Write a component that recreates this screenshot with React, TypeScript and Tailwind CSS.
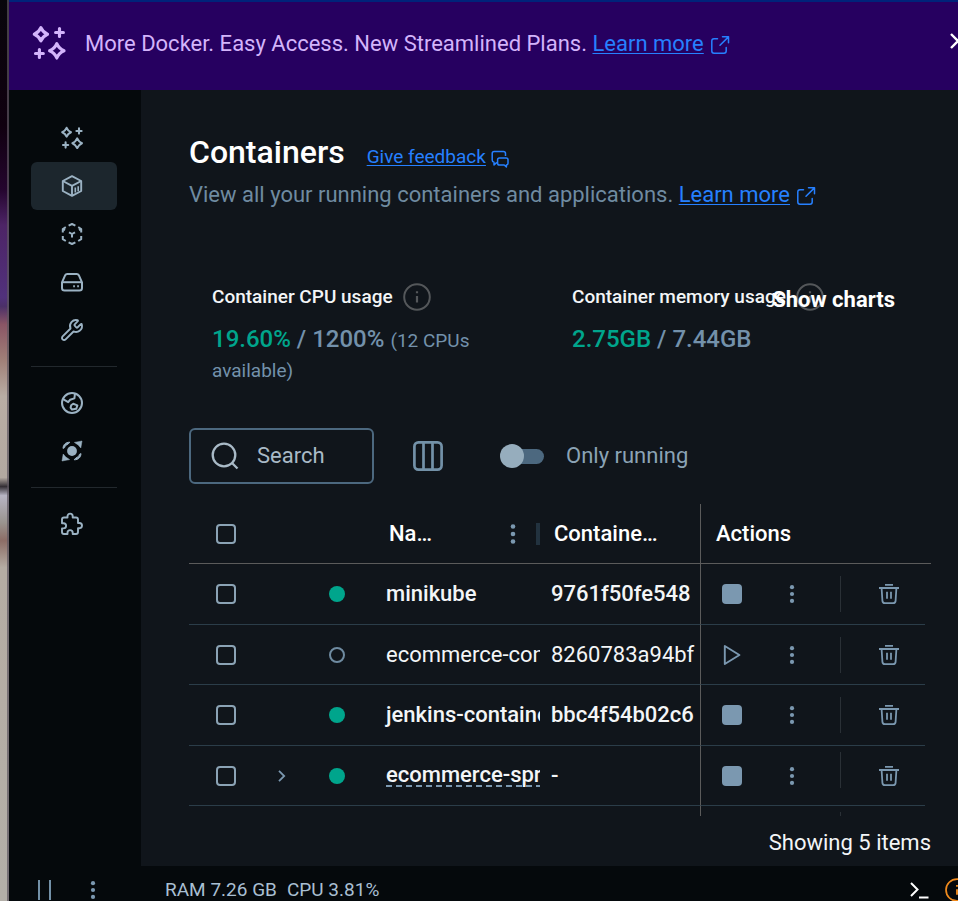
import type { ReactNode } from "react";
import { Wrench } from "lucide-react";

const sparkle = (cx: number, cy: number, r: number) =>
  `M${cx} ${cy - r}Q${cx + r * 0.3} ${cy - r * 0.3} ${cx + r} ${cy}Q${cx + r * 0.3} ${cy + r * 0.3} ${cx} ${cy + r}Q${cx - r * 0.3} ${cy + r * 0.3} ${cx - r} ${cy}Q${cx - r * 0.3} ${cy - r * 0.3} ${cx} ${cy - r}Z`;

function Sparkles({ className }: { className: string }) {
  return (
    <svg viewBox="0 0 24 24" className={className} fill="none" stroke="currentColor" strokeWidth="2.1" strokeLinejoin="round" strokeLinecap="round" aria-hidden="true">
      <path d={sparkle(6.6, 6.2, 4.4)} />
      <path d={sparkle(17.2, 17.2, 4.8)} />
      <path d="M19 2.400v5.200M16.400 5h5.200M5.600 16.400v5.200M3 19h5.200" />
    </svg>
  );
}

function ContainerIcon() {
  return (
    <svg viewBox="0 0 24 24" className="size-6" fill="none" stroke="currentColor" strokeWidth="1.9" strokeLinejoin="round" aria-hidden="true">
      <path d="M12 2.2 21.2 7v10L12 21.8 2.8 17V7Z" />
      <path d="M2.8 7 12 11.8 21.2 7M12 11.8v10" />
      <path d="M15.3 13.6v5M18.2 12.2v5" strokeWidth="1.6" />
    </svg>
  );
}

function ImageIcon() {
  return (
    <svg viewBox="0 0 24 24" className="size-6" fill="none" stroke="currentColor" strokeWidth="2" strokeLinejoin="round" aria-hidden="true">
      <path d="M8.6 3.6 12 2l3.4 1.6M18.2 5.2 21.2 7v3.4M21.2 14v3.2l-3 1.8M15.4 20.4 12 22l-3.4-1.6M5.8 19l-3-1.8V14M2.8 10.4V7l3-1.8" />
      <path d="M9 10.3 12 12l3-1.7M12 12v3.6" />
      <path d="M2.8 7 5 8.2M21.2 7 19 8.2" />
    </svg>
  );
}

function VolumeIcon() {
  return (
    <svg viewBox="0 0 24 24" className="size-6" fill="none" stroke="currentColor" strokeWidth="2" strokeLinejoin="round" aria-hidden="true">
      <path d="M2 12.4 5.2 5.2Q5.8 4 7.2 4h9.6q1.4 0 2 1.2L22 12.4V18q0 2.6-2.6 2.6H4.600Q2 20.600 2 18Z" />
      <path d="M2 12.200h20" />
      <path d="M13.200 16.200h1.700M17.200 16.200h1.700" />
    </svg>
  );
}

function EarthIcon() {
  return (
    <svg viewBox="0 0 24 24" className="size-6" fill="none" stroke="currentColor" strokeWidth="2" strokeLinejoin="round" aria-hidden="true">
      <circle cx="12" cy="12" r="10" />
      <path d="M3 8.200 8.200 11.200 10 8.800 14.400 7.400 15 2.600" />
      <path d="M11.200 14.200 13.200 12.800 17.400 14.400 16.200 17.800 12 18.600 10.600 16.600Z" />
    </svg>
  );
}

function ScoutIcon() {
  return (
    <svg viewBox="0 0 24 24" className="size-6" fill="currentColor" aria-hidden="true">
      <circle cx="12" cy="12" r="4.900" />
      <path d="M22 2 20.800 9Q18.400 5.400 14.400 3.400ZM2 22 3.200 15Q5.600 18.600 9.600 20.600Z" stroke="currentColor" strokeWidth=".5" strokeLinejoin="round" />
      <path d="M3 9.400C3.200 5.600 5.600 3.200 9.800 3.200L8.200 5C6.200 5.800 5.200 6.800 4.600 8.600ZM21 14.600C20.800 18.400 18.400 20.800 14.200 20.800L15.800 19C17.800 18.200 18.800 17.200 19.400 15.400Z" stroke="currentColor" strokeLinejoin="round" />
    </svg>
  );
}

function PuzzleIcon() {
  return (
    <svg viewBox="0 0 24 24" className="size-6" fill="none" stroke="currentColor" strokeWidth="1.9" strokeLinejoin="round" aria-hidden="true">
      <path d="M7.500 5.500V4.200a2.600 2.600 0 0 1 5.200 0v1.300H16q2 0 2 2V11h1.400a2.600 2.600 0 0 1 0 5.200H18V20q0 2-2 2h-3.300v-1.300a2.600 2.600 0 0 0-5.200 0V22H4q-2 0-2-2v-3.600h1.500a2.600 2.600 0 0 0 0-5.200H2V7.500q0-2 2-2Z" />
    </svg>
  );
}

function ExternalIcon() {
  return (
    <svg viewBox="0 0 20 20" className="mt-0.5 size-5 shrink-0" fill="none" stroke="currentColor" strokeWidth="1.500" strokeLinecap="round" strokeLinejoin="round" aria-hidden="true">
      <path d="M7.500 3.800H4Q1.800 3.800 1.800 6v10q0 2.200 2.200 2.200h10q2.200 0 2.200-2.200v-3.500" />
      <path d="M12.500 1.800h6v6M18.200 2.100 10 10.300" />
    </svg>
  );
}

function FeedbackIcon() {
  return (
    <svg viewBox="0 0 20 20" className="mt-1 size-5 shrink-0" fill="none" stroke="currentColor" strokeWidth="1.500" strokeLinejoin="round" aria-hidden="true">
      <path d="M15.500 7V4.600Q15.500 2.500 13.400 2.500H4.200Q2.200 2.500 2.200 4.600V11q0 2 1.800 2.200v2.700L7 13.400" />
      <path d="M9.400 9h6.800q1.800 0 1.800 1.800v3.400q0 1.600-1.600 1.700v2L14.200 16H9.400q-1.800 0-1.800-1.800v-3.400Q7.600 9 9.400 9Z" />
    </svg>
  );
}

function InfoIcon({ className }: { className: string }) {
  return (
    <svg viewBox="0 0 28 28" className={className} fill="none" stroke="currentColor" strokeWidth="2" aria-hidden="true">
      <circle cx="14" cy="14" r="12.800" />
      <path d="M14 13v6.500M14 8.200v2" strokeWidth="2.200" />
    </svg>
  );
}

function Dots({ className }: { className: string }) {
  return (
    <svg viewBox="0 0 8 24" className={className} fill="currentColor" aria-hidden="true">
      <circle cx="4" cy="4.500" r="2.300" />
      <circle cx="4" cy="12" r="2.300" />
      <circle cx="4" cy="19.500" r="2.300" />
    </svg>
  );
}

function TrashIcon() {
  return (
    <svg viewBox="0 0 20 20" className="size-5" fill="none" stroke="currentColor" strokeWidth="1.800" aria-hidden="true">
      <path d="M6 .9h8M0 4h20M2.600 4 3.400 16.800Q3.600 19.100 5.800 19.100h8.400q2.200 0 2.400-2.300L17.400 4M8 7.800v7M12 7.800v7" />
    </svg>
  );
}

function NavItem({ label, active, children }: { label: string; active?: boolean; children: ReactNode }) {
  return (
    <li>
      <a
        href="#"
        aria-label={label}
        className={`flex h-12 items-center rounded-md pl-[29px] text-[#9bb2c3] ${active ? "bg-[#1c262d]" : ""}`}
      >
        {children}
      </a>
    </li>
  );
}

function Sidebar() {
  return (
    <nav className="w-[132px] shrink-0 pt-6 pr-6 pl-[22px]">
      <ul>
        <NavItem label="Ask Gordon"><Sparkles className="size-6" /></NavItem>
        <NavItem label="Containers" active><ContainerIcon /></NavItem>
        <NavItem label="Images"><ImageIcon /></NavItem>
        <NavItem label="Volumes"><VolumeIcon /></NavItem>
        <NavItem label="Builds"><Wrench className="size-6" strokeWidth={1.9} /></NavItem>
      </ul>
      <hr className="my-3 border-[#22282d]" />
      <ul>
        <NavItem label="Docker Hub"><EarthIcon /></NavItem>
        <NavItem label="Docker Scout"><ScoutIcon /></NavItem>
      </ul>
      <hr className="my-3 border-[#22282d]" />
      <ul>
        <NavItem label="Extensions"><PuzzleIcon /></NavItem>
      </ul>
    </nav>
  );
}

type Row = { name: string; id: string; running: boolean; group?: boolean };

const rows: Row[] = [
  { name: "minikube", id: "9761f50fe548", running: true },
  { name: "ecommerce-container", id: "8260783a94bf", running: false },
  { name: "jenkins-container", id: "bbc4f54b02c6", running: true },
  { name: "ecommerce-spring", id: "-", running: true, group: true },
];

function Check({ label }: { label: string }) {
  return (
    <input
      type="checkbox"
      aria-label={label}
      className="mx-auto block size-5 appearance-none rounded-[4px] border-2 border-[#8ba3b5]"
    />
  );
}

function ContainerRow({ row }: { row: Row }) {
  const weight = row.running ? "font-medium" : "font-normal";
  return (
    <tr className="odd:h-[61px] even:h-[60px] [&>td]:border-b [&>td]:border-b-[#2b3d49]">
      <td><Check label={`Select ${row.name}`} /></td>
      <td>
        {row.group && (
          <button aria-label="Expand" className="mx-auto block text-[#7b98b0]">
            <svg viewBox="0 0 20 20" className="size-5" fill="none" stroke="currentColor" strokeWidth="1.800" aria-hidden="true">
              <path d="m7 4.800 5.200 5.200L7 15.200" />
            </svg>
          </button>
        )}
      </td>
      <td>
        <span
          className={`mx-auto block size-4 rounded-full ${row.running ? "bg-[#00a58c]" : "border-2 border-[#6f8ba1]"}`}
        />
      </td>
      <td className="overflow-hidden pl-[13px]">
        <span
          className={`block w-max whitespace-nowrap ${weight} ${row.group ? "border-b-2 border-dashed border-[#7b98b0] leading-5" : "leading-6"}`}
        >
          {row.name}
        </span>
      </td>
      <td className={`pl-[11px] whitespace-nowrap ${weight}`}>{row.id}</td>
      <td className="border-l border-l-[#5b5b5b]">
        <div className="flex h-[59px] items-center text-[#7b98b0]">
          <button aria-label={row.running ? "Stop" : "Start"} className="ml-[21px] size-5">
            {row.running ? (
              <span className="block size-5 rounded-[4px] bg-[#7b98b0]" />
            ) : (
              <svg viewBox="0 0 20 20" className="size-5" fill="none" stroke="currentColor" strokeWidth="1.900" strokeLinejoin="round" aria-hidden="true">
                <path d="M2.800 1v18L17.400 10Z" />
              </svg>
            )}
          </button>
          <button aria-label="More actions" className="ml-[46px]"><Dots className="h-[22px] w-2" /></button>
          <span className={`ml-11 h-9 w-px bg-[#2a3036] ${row.group ? "mt-1.5 self-start" : ""}`} />
          <button aria-label="Delete" className="ml-[38px]"><TrashIcon /></button>
        </div>
      </td>
    </tr>
  );
}

function ContainerTable() {
  return (
    <table className="w-full table-fixed border-separate border-spacing-0 text-left text-[22px] leading-6 text-[#f3f5f7]">
      <colgroup>
        <col className="w-[74px]" />
        <col className="w-[38px]" />
        <col className="w-[72px]" />
        <col />
        <col className="w-[160px]" />
        <col className="w-[225px]" />
        <col className="w-1.5" />
      </colgroup>
      <thead>
        <tr className="h-[60px] text-white [&>th]:border-b [&>th]:border-b-[#5b5b5b] [&>th]:p-0 [&>th]:font-medium">
          <th><Check label="Select all containers" /></th>
          <th />
          <th />
          <th>
            <div className="flex items-center justify-between pl-4">
              <span>Na…</span>
              <span className="flex items-center gap-[19px]">
                <button aria-label="Column menu" className="text-[#7b98b0]"><Dots className="h-6 w-2" /></button>
                <span className="h-[22px] w-1 bg-[#22323f]" />
              </span>
            </div>
          </th>
          <th><div className="pl-3.5">Containe…</div></th>
          <th className="border-l border-l-[#5b5b5b]"><div className="pl-[15px]">Actions</div></th>
          <th />
        </tr>
      </thead>
      <tbody>
        {rows.map((row) => (
          <ContainerRow key={row.id} row={row} />
        ))}
        <tr>
          <td colSpan={5} />
          <td className="h-[60px] border-l border-[#5b5b5b] p-0 align-top">
            <span className="mt-1.5 ml-[139px] block h-9 w-px bg-[#2a3036]" />
          </td>
        </tr>
      </tbody>
    </table>
  );
}

function Metrics() {
  return (
    <section className="relative mt-[74px] grid grid-cols-[360px_1fr] pl-[23px] text-2xl leading-[30px] font-medium text-[#7391ab]">
      <div>
        <h2 className="flex h-7 items-center gap-2.5 text-[19px] text-[#f3f5f7]">
          Container CPU usage <InfoIcon className="size-7 text-[#54575a]" />
        </h2>
        <p className="mt-[13px] max-w-[280px]">
          <span className="text-[#00a58c]">19.60%</span> / 1200% <span className="text-[19px] leading-none font-normal">(12 CPUs available)</span>
        </p>
      </div>
      <div>
        <h2 className="flex h-7 items-center gap-2.5 text-[19px] text-[#f3f5f7]">
          Container memory usage <InfoIcon className="size-7 text-[#54575a]" />
        </h2>
        <p className="mt-[13px]"><span className="text-[#00a58c]">2.75GB</span> / 7.44GB</p>
      </div>
      <button className="absolute top-px right-9 text-[22px] leading-8 font-bold text-white">Show charts</button>
    </section>
  );
}

export default function App() {
  return (
    <div className="flex h-screen overflow-hidden bg-[#05090c] font-['Roboto',sans-serif]">
      <div className="w-[9px] shrink-0 border-r-2 border-[#5d5560]/70 bg-[linear-gradient(to_bottom,#08060c_0%,#10000f_14%,#24052e_21%,#4d2466_25%,#51317c_33%,#4b3068_34%,#8a5565_36%,#a08078_40%,#b9ada4_44%,#b3a9a1_53%,#342f35_54%,#b8b5c4_55%,#9a948f_58%,#8d6d66_60%,#b5aca3_63%,#b3afa8_100%)]" />
      <div className="flex min-w-0 flex-1 flex-col">
        <header className="flex h-[90px] shrink-0 items-center border-t-2 border-[#00237a] bg-[#260060] pl-[22px] text-[22px] text-[#d3b4fb]">
          <Sparkles className="-mt-1.5 size-9 shrink-0" />
          <p className="-mt-1 ml-[18px] flex items-center leading-7 whitespace-pre">
            More Docker. Easy Access. New Streamlined Plans.{" "}
            <a href="#" className="flex items-center gap-1.5 text-[#2680ff]">
              <span className="underline decoration-1 underline-offset-2">Learn more</span>
              <ExternalIcon />
            </a>
          </p>
          <button aria-label="Close" className="-mt-2.5 -mr-3 ml-auto text-white">
            <svg viewBox="0 0 24 24" className="size-6" fill="none" stroke="currentColor" strokeWidth="2.400" aria-hidden="true">
              <path d="m5 5 14 14M19 5 5 19" />
            </svg>
          </button>
        </header>
        <div className="flex min-h-0 flex-1">
          <Sidebar />
          <main className="flex min-w-0 flex-1 flex-col bg-[#10151b] pt-[42px] pr-[27px] pl-12">
            <div className="flex items-center gap-[22px]">
              <h1 className="text-[32px] leading-10 font-medium text-white">Containers</h1>
              <a href="#" className="mt-2.5 flex items-center gap-1 text-[19px] leading-6 text-[#2680ff]">
                <span className="underline decoration-1 underline-offset-2">Give feedback</span>
                <FeedbackIcon />
              </a>
            </div>
            <p className="mt-[9px] flex items-center text-[22px] leading-7 whitespace-pre text-[#6f8ba1]">
              View all your running containers and applications.{" "}
              <a href="#" className="flex items-center gap-1.5 text-[#2680ff]">
                <span className="underline decoration-1 underline-offset-2">Learn more</span>
                <ExternalIcon />
              </a>
            </p>
            <Metrics />
            <div className="mt-11 flex items-center text-[22px] leading-7 text-[#8ba3b5]">
              <label className="flex h-14 w-[185px] items-center gap-[18px] rounded-md border-2 border-[#4c687f] pl-5">
                <svg viewBox="0 0 28 28" className="size-7 shrink-0 text-[#a9bac7]" fill="none" stroke="currentColor" strokeWidth="2.300" aria-hidden="true">
                  <circle cx="13" cy="13" r="11.300" />
                  <path d="m20.500 20.500 6 6" />
                </svg>
                <input type="text" aria-label="Search" placeholder="Search" className="w-full min-w-0 bg-transparent outline-none placeholder:text-[#a9bac7]" />
              </label>
              <button aria-label="Choose columns" className="ml-[39px] text-[#7391a8]">
                <svg viewBox="0 0 30 30" className="size-[30px]" fill="none" stroke="currentColor" strokeWidth="2.700" aria-hidden="true">
                  <rect x="1.400" y="1.400" width="27.200" height="27.200" rx="4" />
                  <path d="M10.500 1.500v27M19.500 1.500v27" />
                </svg>
              </button>
              <label className="ml-[57px] flex items-center gap-[22px]">
                <input
                  type="checkbox"
                  role="switch"
                  className="relative h-6 w-11 appearance-none before:absolute before:top-[5px] before:right-0 before:left-1 before:h-[15px] before:rounded-full before:bg-[#4c687f] after:absolute after:top-0 after:left-0 after:size-6 after:rounded-full after:bg-[#96adbd]"
                />
                Only running
              </label>
            </div>
            <div className="mt-5 min-h-0 flex-1 overflow-hidden">
              <ContainerTable />
            </div>
            <p className="h-[50px] shrink-0 pt-[13px] text-right text-[22px] leading-7 text-[#f3f5f7]">Showing 5 items</p>
          </main>
        </div>
        <footer className="h-[35px] shrink-0 overflow-hidden text-[19px] text-[#a9bfd2]">
          <div className="flex h-12 items-center">
            <button aria-label="Pause" className="ml-[29px] flex gap-[9px]">
              <span className="h-5 w-0.5 bg-[#7391a8]" />
              <span className="h-5 w-0.5 bg-[#7391a8]" />
            </button>
            <button aria-label="Engine menu" className="ml-[38px] text-[#7b98b0]"><Dots className="h-[22px] w-2" /></button>
            <span className="ml-[68px]">RAM 7.26 GB</span>
            <span className="ml-2.5">CPU 3.81%</span>
            <button aria-label="Terminal" className="ml-auto text-white">
              <svg viewBox="0 0 20 20" className="size-5" fill="none" stroke="currentColor" strokeWidth="2" aria-hidden="true">
                <path d="m2 3 6.500 6.500L2 16M10 17.500h9.500" />
              </svg>
            </button>
            <button aria-label="Notices" className="-mr-[11px] ml-4 text-[#f08a1d]"><InfoIcon className="size-6" /></button>
          </div>
        </footer>
      </div>
    </div>
  );
}
